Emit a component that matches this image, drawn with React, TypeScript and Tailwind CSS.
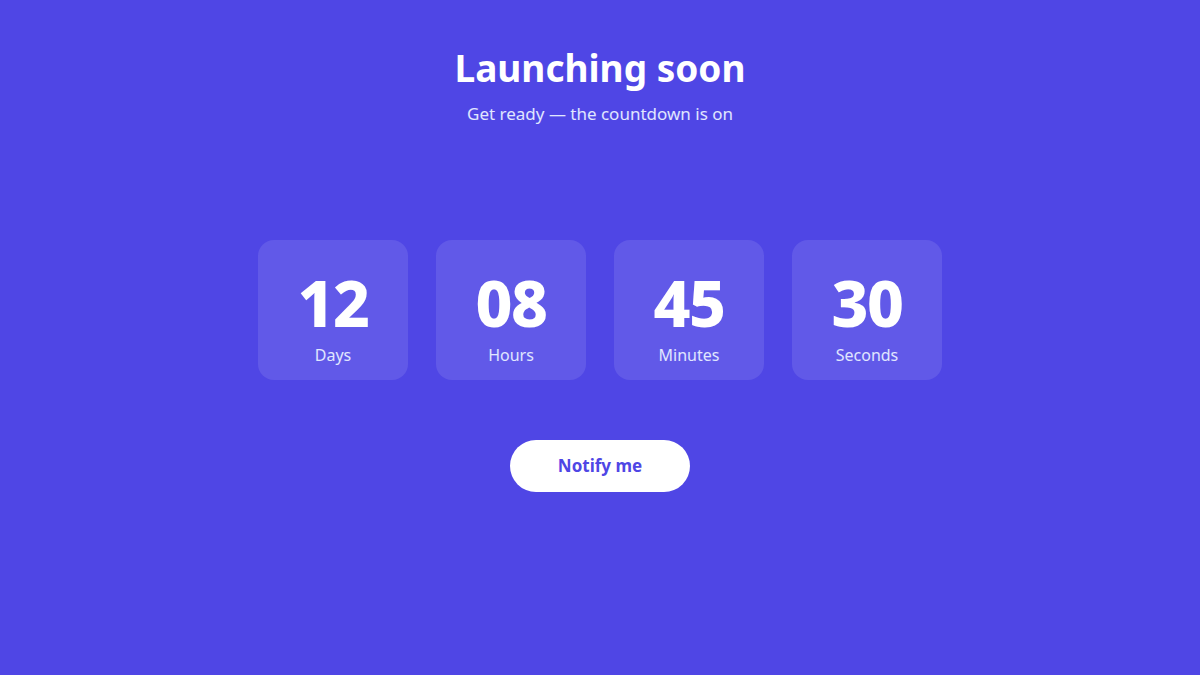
export default function App() {
  const units = [
    { value: "12", label: "Days" },
    { value: "08", label: "Hours" },
    { value: "45", label: "Minutes" },
    { value: "30", label: "Seconds" },
  ];

  return (
    <div className="flex min-h-screen flex-col items-center bg-[#4f46e5] pt-12 font-['Noto_Sans',sans-serif] text-white">
      <h1 className="text-[37px] leading-10 font-bold">Launching soon</h1>
      <p className="mt-3 text-[17px] leading-7 text-indigo-100">Get ready — the countdown is on</p>

      <div className="mt-[112px] flex gap-7">
        {units.map((u) => (
          <div
            key={u.label}
            className="flex h-[140px] w-[150px] flex-col items-center rounded-2xl bg-white/10 pt-[31px]"
          >
            <span className="text-[64px] leading-none font-extrabold tracking-tight">{u.value}</span>
            <span className="mt-2 text-base leading-6 text-indigo-100">{u.label}</span>
          </div>
        ))}
      </div>

      <button className="mt-[60px] h-[52px] w-[180px] rounded-full bg-white text-[17px] font-bold text-[#4f46e5]">
        Notify me
      </button>
    </div>
  );
}
